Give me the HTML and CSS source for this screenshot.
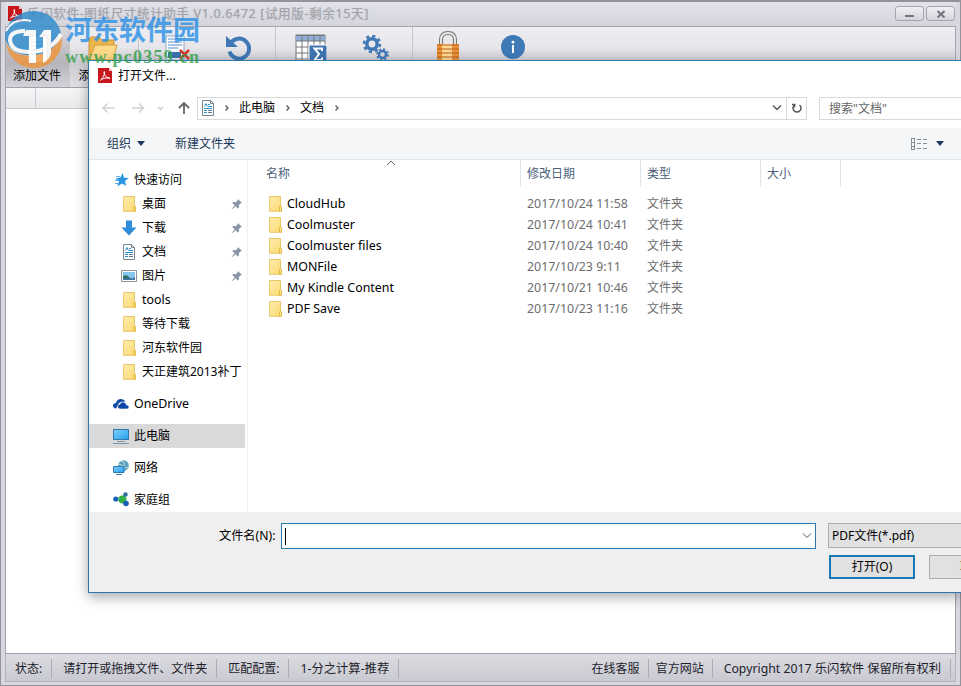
FILE: index.html
```html
<!DOCTYPE html>
<html lang="zh-CN">
  <head>
    <meta charset="UTF-8" />
    <meta name="viewport" content="width=device-width, initial-scale=1.0" />
    <title>乐闪软件-图纸尺寸统计助手</title>
    <link rel="stylesheet" href="styles.css">
  </head>
  <body>
    <!-- 公共图标 -->
    <svg class="symbols">
      <linearGradient id="folderFill" x1="0" y1="0" x2="1" y2="1">
        <stop offset="0" stop-color="#ffedb0" />
        <stop offset="1" stop-color="#fbd96e" />
      </linearGradient>
      <linearGradient id="screenFill" x1="0" y1="0" x2="1" y2="1">
        <stop offset="0" stop-color="#7fd0fb" />
        <stop offset="1" stop-color="#26a0ee" />
      </linearGradient>
      <symbol id="folder" viewBox="0 0 16 16">
        <path d="M2.500 .5h11v10l1 .8v4h-12z" fill="url(#folderFill)" stroke="#e8c767" />
        <path d="M12.500 15v-4l1-1.500 1 1.500v4z" fill="#ffe79a" stroke="#e3b93f" />
      </symbol>
      <symbol id="doc" viewBox="0 0 16 16">
        <path d="M2.500 .5h8l3 3v12h-11z" fill="#fff" stroke="#7b8790" />
        <path d="M10.500 .5v3h3" fill="none" stroke="#7b8790" />
        <path d="M4.500 6.500l1.500-3 1.500 3M8 4.500h2M8 6.500h4M4 8.500h8M4 10.500h3M4 12.500h3" fill="none" stroke="#2b8fc9" />
        <path d="M8 10.500h4M8 12.500h4" stroke="#66757f" />
      </symbol>
      <symbol id="pin" viewBox="0 0 12 12">
        <path d="M7 1l4 4-1.200.3-2 2 .2 2.500-1 .8L4.700 8.300 1 11.300l-.5-.4L3.700 7.200 1.300 5l.9-1 2.500.2 2-2z" fill="#8a97a5" />
      </symbol>
      <symbol id="pdf" viewBox="0 0 14 15">
        <path d="M0 0h11l3 3v12H0z" fill="#c8161d" />
        <path d="M11 0v3h3z" fill="#f3c9ca" />
        <path d="M2 12.500c2-1 4-4.500 4.600-7.500.3-2-.8-2-.6 0 .4 2.700 3 5.200 6 5.300-2-1-6-.3-8.500 1.200" fill="none" stroke="#fff" />
      </symbol>
    </svg>

    <div class="window">
      <header class="titlebar">
        <svg class="app-icon" width="14" height="15"><use href="#pdf" /></svg>
        <span class="app-title">乐闪软件-图纸尺寸统计助手 V1.0.6472 [试用版-剩余15天]</span>
        <div class="win-buttons">
          <button class="win-btn"><svg width="10" height="8"><path d="M0 6h9" stroke="#74747e" stroke-width="2" /></svg></button>
          <button class="win-btn"><svg width="10" height="8"><path d="M1.500 1l7 6.500M8.500 1l-7 6.500" stroke="#74747e" stroke-width="2" /></svg></button>
        </div>
      </header>

      <nav class="toolbar">
        <div class="tool tool-add">
          <svg width="30" height="32" viewBox="0 0 30 32">
            <path d="M5 3h20v27H5z" fill="#fdfdfd" stroke="#aaa" />
            <path d="M9 9h12M9 13h12M9 17h12M9 21h8" stroke="#5a9bd5" />
          </svg>
          <span>添加文件</span>
        </div>
        <div class="tool tool-folder">
          <svg width="32" height="32" viewBox="0 0 32 32">
            <path d="M2 27V6l2-2h8l3 3h12v5" fill="#edb64c" stroke="#c9913a" />
            <path d="M2 27l6-15h22l-4 15z" fill="#ffd98a" stroke="#cf9a42" />
          </svg>
          <span>添加目录</span>
        </div>
        <div class="tool tool-clear">
          <svg width="32" height="32" viewBox="0 0 32 32">
            <path d="M3 1h18v24H3z" fill="#fafcff" stroke="#8fa8c8" />
            <path d="M5 4h14M5 7h14M5 10h14M5 13h10" stroke="#5a8cc8" />
            <path d="M5 17h13v6H5z" fill="#3d72ad" />
            <path d="M17 15l9 9M26 15l-9 9" stroke="#d7372b" stroke-width="2.500" />
          </svg>
        </div>
        <div class="tool tool-refresh">
          <svg width="28" height="28" viewBox="0 0 28 28">
            <path d="M5.500 9.500A10 10 0 1 1 4.500 17.500" fill="none" stroke="#3f78b5" stroke-width="4" />
            <path d="M1 2v11h12z" fill="#3f78b5" />
          </svg>
        </div>
        <div class="tool tool-table">
          <svg width="32" height="30" viewBox="0 0 32 30">
            <path d="M1 1h29v26H1z" fill="#fff" stroke="#777" />
            <path d="M1 1h29v6H1z" fill="#8fafd9" />
            <path d="M1 1.500h29M1 7h29M1 13h29M1 19h29M1 25h29M7 1v26M13 1v26M19 1v26M25 1v26" stroke="#777" />
            <path d="M14 11h18v19H14z" fill="#3f74b2" stroke="#fff" />
            <path d="M27 17v-2.500h-7.500l4.500 5.500-4.500 6H27V23.500" fill="none" stroke="#fff" stroke-width="2" />
          </svg>
        </div>
        <div class="tool tool-gears">
          <svg width="28" height="28" viewBox="0 0 28 28" fill="none" stroke="#4178b5">
            <circle cx="10" cy="10" r="5.200" stroke-width="3.500" />
            <circle cx="10" cy="10" r="8" stroke-width="2.500" stroke-dasharray="3.140 3.140" />
            <circle cx="20.500" cy="20.500" r="3.500" stroke-width="2.400" />
            <circle cx="20.500" cy="20.500" r="5.400" stroke-width="1.800" stroke-dasharray="2.120 2.120" />
          </svg>
        </div>
        <div class="tool tool-lock">
          <svg width="24" height="32" viewBox="0 0 24 32">
            <path d="M5 14V9q0-7 7-7t7 7v5" fill="none" stroke="#777" stroke-width="4" />
            <path d="M5 14V9q0-7 7-7t7 7v5" fill="none" stroke="#e4e4e4" stroke-width="2" />
            <path d="M1 13h22v18H1z" fill="#e8923a" />
            <path d="M6 13h10v18H6z" fill="#ffd894" />
            <path d="M1 14h22M1 18h22M1 22h22M1 26h22" stroke="#bd601d" />
          </svg>
        </div>
        <div class="tool tool-info">
          <svg width="24" height="24" viewBox="0 0 24 24">
            <circle cx="12" cy="12" r="12" fill="#3f7ab7" />
            <path d="M12 10v8" stroke="#fff" stroke-width="2" />
            <circle cx="12" cy="7.200" r="1.400" fill="#fff" />
          </svg>
        </div>
      </nav>

      <main class="grid-area">
        <div class="grid-head"><span></span></div>
      </main>

      <footer class="statusbar">
        <span class="st st-state">状态:</span>
        <span class="st st-tip">请打开或拖拽文件、文件夹</span>
        <span class="st st-match">匹配配置:</span>
        <span class="st st-rule">1-分之计算-推荐</span>
        <span class="st st-service">在线客服</span>
        <span class="st st-site">官方网站</span>
        <span class="st st-copy">Copyright 2017 乐闪软件 保留所有权利</span>
      </footer>
    </div>

    <div class="dialog">
      <div class="dlg-title">
        <svg width="14" height="15"><use href="#pdf" /></svg>
        <span>打开文件...</span>
      </div>

      <div class="dlg-nav">
        <svg class="arrows" width="96" height="16" fill="none" stroke-width="1.500">
          <path d="M13.500 8H2M6.500 3.500L2 8l4.500 4.500M31 8h11.500M38 3.500L42.500 8 38 12.500" stroke="#d2d2d2" />
          <path d="M57 7l2.500 2.500L62 7" stroke="#cfcfcf" />
          <path d="M83 14V3M78 8l5-5 5 5" stroke="#666" stroke-width="1.800" />
        </svg>
        <div class="address">
          <svg width="16" height="16"><use href="#doc" /></svg>
          <svg class="chev" width="6" height="8"><path d="M1.500 1.500L4 4 1.500 6.500" /></svg>
          <span>此电脑</span>
          <svg class="chev" width="6" height="8"><path d="M1.500 1.500L4 4 1.500 6.500" /></svg>
          <span>文档</span>
          <svg class="chev" width="6" height="8"><path d="M1.500 1.500L4 4 1.500 6.500" /></svg>
          <svg class="addr-down" width="10" height="8"><path d="M1 1.500l4 4 4-4" /></svg>
          <div class="reload">
            <svg width="12" height="12"><path d="M3.500 3A4 4 0 1 0 8.500 3M3.500 5.500V1.800M1 2.500h3.500" fill="none" stroke="#555" stroke-width="1.500" /></svg>
          </div>
        </div>
        <div class="search">搜索"文档"</div>
      </div>

      <div class="dlg-toolbar">
        <span>组织</span>
        <i class="caret"></i>
        <span class="new-folder">新建文件夹</span>
        <svg class="view-icon" width="18" height="14">
          <path d="M1.500 1v12M4.500 1v12M1 1.500h4M1 5.500h4M1 9.500h4M1 12.500h4M7 2.500h4M13 2.500h4M7 6.500h4M13 6.500h4M7 11.500h4M13 11.500h4" stroke="#868d94" />
        </svg>
        <i class="caret"></i>
      </div>

      <div class="dlg-body">
        <aside class="tree">
          <div class="node root">
            <svg width="16" height="16"><path d="M9.500 1l1.500 4.700 4.700.3-3.700 3.100 1.100 5L9.300 11.400l-5 2.800 1.700-5L2.500 6.200l4.800-.4z" fill="#2a94e0" /><path d="M3 4.500h4M2 8.500h3M2 11.500h3" stroke="#5bb0ec" /></svg>
            <span>快速访问</span>
          </div>
          <div class="node">
            <svg width="16" height="16"><use href="#folder" /></svg>
            <span>桌面</span>
            <svg class="pin" width="12" height="12"><use href="#pin" /></svg>
          </div>
          <div class="node">
            <svg width="16" height="16"><path d="M5 .5h6v7h4.500L8 15.500.5 7.500H5z" fill="#2f8cd8" /></svg>
            <span>下载</span>
            <svg class="pin" width="12" height="12"><use href="#pin" /></svg>
          </div>
          <div class="node">
            <svg width="16" height="16"><use href="#doc" /></svg>
            <span>文档</span>
            <svg class="pin" width="12" height="12"><use href="#pin" /></svg>
          </div>
          <div class="node">
            <svg width="16" height="16"><path d="M.5 2.500h15v11H.5z" fill="#fff" stroke="#8a949c" /><path d="M2 4h12v8H2z" fill="#85c6ed" /><path d="M2 8q4-2 6 1t6 0v3H2z" fill="#356f63" /><path d="M2 10.500h12V12H2z" fill="#3e78ae" /></svg>
            <span>图片</span>
            <svg class="pin" width="12" height="12"><use href="#pin" /></svg>
          </div>
          <div class="node">
            <svg width="16" height="16"><use href="#folder" /></svg>
            <span class="en">tools</span>
          </div>
          <div class="node">
            <svg width="16" height="16"><use href="#folder" /></svg>
            <span>等待下载</span>
          </div>
          <div class="node">
            <svg width="16" height="16"><use href="#folder" /></svg>
            <span>河东软件园</span>
          </div>
          <div class="node">
            <svg width="16" height="16"><use href="#folder" /></svg>
            <span>天正建筑2013补丁</span>
          </div>
          <div class="node root gap">
            <svg width="16" height="16"><path d="M3 12.500Q0 12 0 9.500 0 7 3 7q1-4 5-4 3 0 4.500 2.500L8 6Q5 7 5 9.500z" fill="#1049a8" /><path d="M7 13q-2.500-.5-2.500-2.500 0-2 2.500-2.500 1-2.500 3.500-2T13.500 9Q16 9 16 11t-2 2z" fill="#0c46a6" stroke="#fff" stroke-width=".6" /></svg>
            <span class="en">OneDrive</span>
          </div>
          <div class="node root gap selected">
            <svg width="16" height="16"><path d="M.5 1.500h15v10H.5z" fill="url(#screenFill)" stroke="#2f78ad" /><path d="M4 13.500h8M0 15.500h16" stroke="#7d96aa" /></svg>
            <span>此电脑</span>
          </div>
          <div class="node root gap">
            <svg width="16" height="16"><circle cx="10.500" cy="5.500" r="5.300" fill="#5d9fc0" /><path d="M8 1q5 1 3 5t4 1M6 4l4 2" stroke="#c4e6d6" fill="none" /><path d="M.5 6.500h10.500v6H.5z" fill="url(#screenFill)" stroke="#2b79b0" /><path d="M3 14.500h6" stroke="#3a83b6" /></svg>
            <span>网络</span>
          </div>
          <div class="node root gap">
            <svg width="16" height="16"><path d="M3 7l9-4M3 7l10 5" stroke="#8fc7d8" /><circle cx="2.800" cy="7" r="2.600" fill="#1b62b5" /><circle cx="9.500" cy="7.500" r="4" fill="#35b14a" /><circle cx="12.500" cy="2.500" r="2.200" fill="#2a6f9e" /><circle cx="13" cy="11.500" r="2.800" fill="#1c5fb8" /></svg>
            <span>家庭组</span>
          </div>
        </aside>

        <section class="files">
          <svg class="sort" width="10" height="6"><path d="M1 5l4-4 4 4" fill="none" stroke="#666" /></svg>
          <div class="row head">
            <span>名称</span><span>修改日期</span><span>类型</span><span>大小</span>
          </div>
          <div class="row">
            <span class="name"><svg width="16" height="16"><use href="#folder" /></svg>CloudHub</span>
            <span class="en">2017/10/24 11:58</span><span>文件夹</span>
          </div>
          <div class="row">
            <span class="name"><svg width="16" height="16"><use href="#folder" /></svg>Coolmuster</span>
            <span class="en">2017/10/24 10:41</span><span>文件夹</span>
          </div>
          <div class="row">
            <span class="name"><svg width="16" height="16"><use href="#folder" /></svg>Coolmuster files</span>
            <span class="en">2017/10/24 10:40</span><span>文件夹</span>
          </div>
          <div class="row">
            <span class="name"><svg width="16" height="16"><use href="#folder" /></svg>MONFile</span>
            <span class="en">2017/10/23 9:11</span><span>文件夹</span>
          </div>
          <div class="row">
            <span class="name"><svg width="16" height="16"><use href="#folder" /></svg>My Kindle Content</span>
            <span class="en">2017/10/21 10:46</span><span>文件夹</span>
          </div>
          <div class="row">
            <span class="name"><svg width="16" height="16"><use href="#folder" /></svg>PDF Save</span>
            <span class="en">2017/10/23 11:16</span><span>文件夹</span>
          </div>
        </section>
      </div>

      <div class="dlg-footer">
        <div class="field-row">
          <label>文件名(N):</label>
          <div class="combo">
            <i class="cursor"></i>
            <svg width="10" height="8"><path d="M1 1.500l4 4 4-4" fill="none" stroke="#555" /></svg>
          </div>
          <div class="filter">PDF文件(*.pdf)</div>
        </div>
        <div class="button-row">
          <button class="btn primary">打开(O)</button>
          <button class="btn cancel">取消</button>
        </div>
      </div>
    </div>

    <!-- 水印 -->
    <div class="watermark">
      <svg width="60" height="60" viewBox="0 0 60 60">
        <path d="M2 33q8 15 28 12 20-4 28-18a28 28 0 0 1-56 6z" fill="#f0953c" />
        <path d="M1 29C1 13 13 1 29 1c15 0 26 10 28 23-4 13-14 20-26 21Q8 47 1 29z" fill="#2f8cce" />
        <path d="M22 20h10v33h-7V26h-6z" fill="#fff" />
        <path d="M40 20h7v24q-2 6-8 9V27h-4z" fill="#fff" />
        <path d="M21 21Q6 21 6 30q1 12 20 12 22-1 31-18" fill="none" stroke="#fff" stroke-width="4" />
        <path d="M2 21Q10 7 27 11" fill="none" stroke="#fff" stroke-width="2" />
      </svg>
      <div class="wm-text">
        <div class="wm-name">河东软件园</div>
        <div class="wm-url">www.pc0359.cn</div>
      </div>
    </div>
  </body>
</html>
```
FILE: styles.css
```css
* {
  box-sizing: border-box;
}
body {
  margin: 0;
  width: 961px;
  height: 686px;
  overflow: hidden;
  position: relative;
  font-family: 'Noto Sans', 'Noto Sans CJK SC', sans-serif;
  font-size: 12px;
  line-height: 16px;
  color: #000;
}
svg {
  display: block;
  flex-shrink: 0;
}
button {
  font: inherit;
  padding: 0;
}
span,
label {
  white-space: nowrap;
}
.symbols {
  position: absolute;
  width: 0;
  height: 0;
}
.en {
  font-size: 12.4px;
}

/* 主窗口 */
.window {
  display: flex;
  flex-direction: column;
  height: 686px;
  padding: 0 4px 3px;
  background-color: #d7d7e0;
  border: 1px solid #92929c;
  border-top-width: 2px;
}
.titlebar {
  display: flex;
  align-items: center;
  height: 24px;
  padding: 0 3px;
  background: linear-gradient(#e2e2ea, #d4d4dc);
}
.app-icon {
  margin-top: -2px;
}
.app-title {
  margin-left: 5px;
  font-size: 12.6px;
  letter-spacing: 0.58px;
  color: #a3a3aa;
  text-shadow: 0 0 1px #b8b8be;
}
.win-buttons {
  display: flex;
  gap: 2px;
  margin-top: -1px;
  margin-left: auto;
  margin-right: -2px;
}
.win-btn {
  display: flex;
  align-items: center;
  justify-content: center;
  width: 29px;
  height: 15px;
  border: 1px solid #a5a5af;
  border-radius: 3px;
  background: linear-gradient(#f0f0f4, #d4d4dc);
}
.toolbar {
  display: flex;
  height: 61px;
  border: 1px solid #a5a5ad;
  border-bottom: 0;
  background: linear-gradient(#ededf2, #e6e6ea 35%, #cbcbd0 58%, #e0e0e4);
}
.tool {
  display: flex;
  flex-direction: column;
  align-items: center;
  flex-shrink: 0;
  width: 69px;
  height: 60px;
  padding-top: 6px;
  border-right: 1px solid #c6c6cc;
  overflow: hidden;
}
.tool span {
  margin-top: 3px;
}
.tool-add {
  width: 64px;
  padding-right: 1px;
  background: linear-gradient(#d9d9de, #b4b4ba 60%, #d2d2d8);
}
.tool-clear {
  padding-top: 8px;
  padding-left: 12px;
}
.tool-folder {
  padding-right: 3px;
}
.tool-clear,
.tool-gears {
  border-right-color: transparent;
}
.tool-refresh {
  width: 68px;
  padding-right: 5px;
}
.tool-refresh,
.tool-table,
.tool-gears {
  padding-top: 7px;
}
.tool-table {
  border-right: 0;
}
.tool-gears {
  width: 68px;
  padding-right: 6px;
  border-right-color: #c6c6cc;
}
.tool-lock {
  padding-top: 4px;
  border-right: 0;
}
.tool-info {
  width: 62px;
  padding-top: 8px;
  border-right: 0;
}
.grid-area {
  flex: 1;
  background-color: #fff;
  border: 1px solid #a0a0aa;
}
.grid-head {
  height: 21px;
  background: linear-gradient(#f6f6f8, #e9e9ec);
  border-bottom: 1px solid #c9c9ce;
}
.grid-head span {
  display: block;
  width: 30px;
  height: 20px;
  border-right: 1px solid #c9c9ce;
}
.statusbar {
  display: flex;
  align-items: center;
  height: 28px;
  padding-top: 1px;
  padding-right: 4px;
  border: 1px solid #b3b3bb;
  border-top: 0;
  background: linear-gradient(#dcdce2, #c9c9d1);
  color: #1e1e2c;
}
.st {
  height: 19px;
  line-height: 20px;
  padding: 0 10px;
  border-right: 1px solid #aeaeb8;
}
.st-state {
  padding: 0 9px;
}
.st-tip {
  padding: 0 9px 0 11px;
}
.st-match {
  padding: 0 9px 0 11px;
}
.st-rule {
  font-size: 12.3px;
  padding-left: 11px;
  padding-right: 9px;
}
.st-service {
  margin-left: auto;
  padding-right: 8px;
}
.st-site {
  padding: 0 8px 0 7px;
}
.st-copy {
  padding: 0 9px 0 11px;
  font-size: 12.3px;
}

/* 打开文件对话框 */
.dialog {
  position: absolute;
  left: 88px;
  top: 60px;
  right: 0;
  height: 533px;
  display: flex;
  flex-direction: column;
  background-color: #fff;
  border: 1px solid #2a7ab5;
  border-right: 0;
  box-shadow: 0 4px 12px rgba(0, 0, 0, 0.35);
}
.dlg-title {
  display: flex;
  align-items: center;
  gap: 6px;
  height: 29px;
  padding-left: 9px;
}
.dlg-nav {
  display: flex;
  align-items: center;
  height: 38px;
  padding: 0 0 2px 12px;
}
.address {
  display: flex;
  align-items: center;
  flex-shrink: 0;
  width: 610px;
  height: 23px;
  padding-left: 2px;
  border: 1px solid #d9d9d9;
}
.address span {
  margin: 0 10px 0 9px;
}
.address svg {
  fill: none;
}
.chev {
  stroke: #555;
  stroke-width: 1.3;
}
.address > svg:first-child + .chev {
  margin-left: 8px;
}
.addr-down {
  margin-left: auto;
  margin-right: 4px;
  stroke: #555;
  stroke-width: 1.4;
}
.reload {
  display: flex;
  align-items: center;
  justify-content: center;
  width: 20px;
  height: 21px;
  border-left: 1px solid #d9d9d9;
}
.search {
  flex: 1;
  height: 23px;
  margin-left: 12px;
  padding-left: 9px;
  line-height: 21px;
  border: 1px solid #d9d9d9;
  border-right: 0;
  color: #666;
}
.dlg-toolbar {
  display: flex;
  align-items: center;
  height: 32px;
  padding-left: 18px;
  background-color: #f4f6f8;
  border-bottom: 1px solid #e3e6e9;
  color: #1e395b;
}
.caret {
  margin-left: 6px;
  border: 4px solid transparent;
  border-top: 5px solid #1e395b;
  border-bottom: 0;
}
.new-folder {
  margin-left: 30px;
}
.view-icon {
  margin-left: auto;
}
.view-icon + .caret {
  margin-left: 8px;
  margin-right: 17px;
}
.dlg-body {
  display: flex;
  height: 352px;
}
.tree {
  width: 159px;
  padding-top: 8px;
  border-right: 1px solid #f0f0f0;
  overflow: hidden;
}
.node {
  display: flex;
  align-items: center;
  gap: 5px;
  width: 156px;
  height: 24px;
  padding-left: 32px;
}
.node.root {
  padding-left: 24px;
}
.node.gap {
  margin-top: 8px;
}
.node.selected {
  background-color: #d9d9d9;
}
.pin {
  margin-left: auto;
  margin-right: 2px;
}
.files {
  position: relative;
  flex: 1;
}
.sort {
  position: absolute;
  left: 138px;
  top: 0;
}
.row {
  display: grid;
  grid-template-columns: 273px 120px 120px 80px;
  align-items: center;
  height: 21px;
  color: #6d6d6d;
}
.row span {
  padding-left: 6px;
}
.row.head {
  height: 27px;
  margin-bottom: 6px;
  color: #4c607a;
}
.row.head span {
  height: 27px;
  line-height: 28px;
  border-right: 1px solid #e0e3e6;
}
.row.head span:first-child {
  padding-left: 18px;
}
.row .name {
  display: flex;
  align-items: center;
  gap: 4px;
  padding-left: 19px;
  font-size: 12.4px;
  color: #000;
}
.dlg-footer {
  flex: 1;
  padding: 11px 0 0 130px;
  background-color: #efefef;
  overflow: hidden;
}
.field-row {
  display: flex;
  align-items: center;
}
.field-row label {
  width: 62px;
  font-size: 12.2px;
}
.combo {
  display: flex;
  align-items: center;
  justify-content: space-between;
  flex-shrink: 0;
  width: 535px;
  height: 26px;
  padding: 0 3px;
  background-color: #fff;
  border: 1px solid #2a7ab5;
}
.cursor {
  width: 1px;
  height: 17px;
  background-color: #000;
}
.filter {
  flex: 1;
  height: 25px;
  margin: 0 0 1px 12px;
  padding-left: 3px;
  line-height: 23px;
  background-color: #e1e1e1;
  border: 1px solid #adadad;
  border-right: 0;
}
.button-row {
  display: flex;
  gap: 14px;
  margin: 6px 0 0 610px;
}
.btn {
  flex-shrink: 0;
  width: 86px;
  height: 24px;
  background-color: #e1e1e1;
  border: 1px solid #adadad;
}
.btn.primary {
  border: 2px solid #1c78bd;
}

/* 水印浮在所有窗口之上 */
.watermark {
  position: absolute;
  left: 4px;
  top: 10px;
  display: flex;
  opacity: 0.82;
}
.wm-text {
  margin-left: 1px;
}
.wm-name {
  height: 36px;
  line-height: 37px;
  font-family: 'Noto Sans CJK SC', sans-serif;
  font-size: 27px;
  font-weight: bold;
  color: #2e93e6;
  white-space: nowrap;
}
.wm-url {
  font-family: 'Liberation Serif', serif;
  font-size: 18px;
  font-weight: bold;
  letter-spacing: 1.25px;
  line-height: 22px;
  color: #35a04c;
}
```
